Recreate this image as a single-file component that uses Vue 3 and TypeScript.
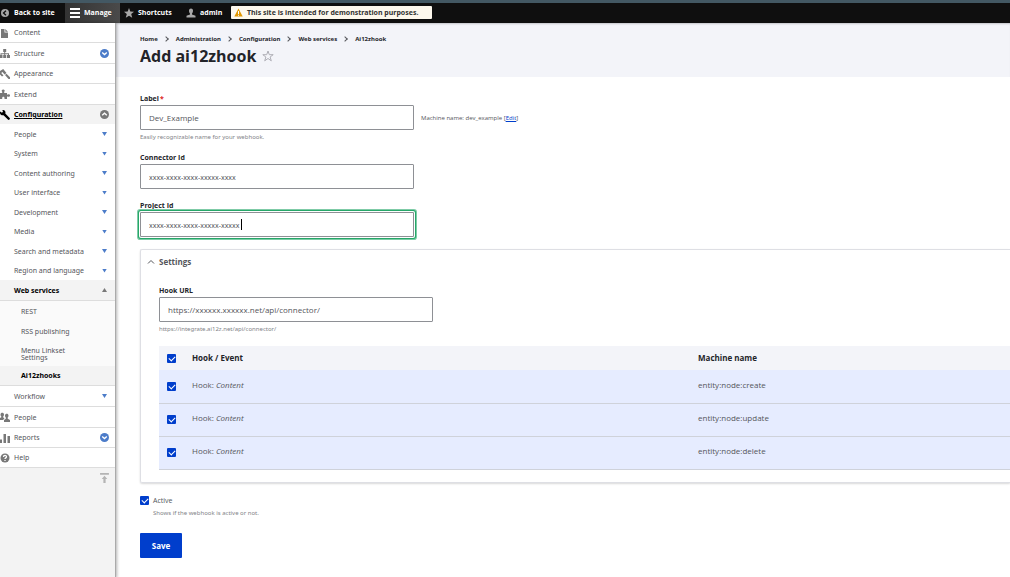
<script setup lang="ts">
import { ref } from 'vue'

interface MenuItem {
  label: string
  icon?: string
  toggle?: boolean
}

const topItems: MenuItem[] = [
  { label: 'Content', icon: 'content' },
  { label: 'Structure', icon: 'structure', toggle: true },
  { label: 'Appearance', icon: 'appearance' },
  { label: 'Extend', icon: 'extend' },
]
const configItems = [
  'People',
  'System',
  'Content authoring',
  'User interface',
  'Development',
  'Media',
  'Search and metadata',
  'Region and language',
]
const serviceItems = ['REST', 'RSS publishing', 'Menu Linkset Settings']
const bottomItems: MenuItem[] = [
  { label: 'People', icon: 'people' },
  { label: 'Reports', icon: 'reports', toggle: true },
  { label: 'Help', icon: 'help' },
]
const icons: Record<string, string> = {
  content: 'M1 1h3.500v3.500H8V10H1zM5.300 1L8 3.700H5.300z',
  structure: 'M3.200 1h3v3H5.200v1.200H9V7h1v3H7V7h1V6.200H5.200V7h1v3h-3V7h1V6.200H1.500V7h1v3H0V7h.5V5.200h3.700V4h-1z',
  appearance: 'M0 2L3.200 0l3.300 4-2 1.500L2.500 3 1.200 4 3.500 6.500 2 7.500 0 5.500zM5 6l1.500-1.200L10 8.300v1.700H8.500z',
  extend: 'M0 4h2.200V2.800C1 1.500 2 .5 3.200.5s2.200 1 1 2.300V4H7v1.700c1.500-1 3-.5 3 .8s-1.500 1.800-3 .8V10H4.500V9C4.500 7.300 2.200 7.300 2.200 9v1H0z',
  people: 'M.5 2.500C.5 0 4 0 4 2.500c0 1-.3 1.600-.8 2v1l1 .5v1H3.500v1H0V6l1.300-.7v-.8C.8 4 .5 3.500.5 2.500zM5 3.500C5 1 8.500 1 8.500 3.500c0 1-.3 1.600-.8 2v1.300L10 8v2H4V8l1.800-1.200V5.500c-.5-.4-.8-1-.8-2z',
  reports: 'M0 6.500h2V10H0zM3.500 1H6v9H3.500zM7.500 3H10v7H7.500z',
}

const label = ref('Dev_Example')
const connectorId = ref('xxxx-xxxx-xxxx-xxxxx-xxxx')
const projectId = ref('xxxx-xxxx-xxxx-xxxxx-xxxxx')
const hookUrl = ref('https://xxxxxx.xxxxxx.net/api/connector/')
const active = ref(true)
const allHooks = ref(true)
const hooks = ref([
  { name: 'entity:node:create', on: true },
  { name: 'entity:node:update', on: true },
  { name: 'entity:node:delete', on: true },
])
const crumbs = ['Home', 'Administration', 'Configuration', 'Web services', 'Ai12zhook']
</script>

<template>
  <div class="page">
    <nav class="toolbar" aria-label="Toolbar">
      <a class="tab back" href="#">
        <svg class="icon" viewBox="0 0 10 10"><circle cx="5" cy="5" r="4" /><path class="cut" d="M6 2.800L3.500 5 6 7.200" /></svg>
        Back to site
      </a>
      <a class="tab manage" href="#">
        <svg class="icon bars" viewBox="0 0 10 10"><path d="M0 0h10v2H0zM0 4h10v2H0zM0 8h10v2H0z" /></svg>
        Manage
      </a>
      <a class="tab shortcuts" href="#">
        <svg class="icon" viewBox="0 0 10 10"><path d="M5 0l1.300 3.500L10 3.700 7.200 6l1 3.800L5 7.700 1.800 9.800l1-3.800L0 3.700l3.700-.2z" /></svg>
        Shortcuts
      </a>
      <a class="tab user" href="#">
        <svg class="icon" viewBox="0 0 10 10"><path d="M3 2.500C3-.3 7-.3 7 2.500c0 1.500-.4 2.300-1 3V6.500l3.500 1.300V9.500h-9V7.800L4 6.500V5.500c-.6-.7-1-1.500-1-3z" /></svg>
        admin
      </a>
      <p class="notice">
        <svg class="warn" viewBox="0 0 9 9"><path fill="#e29700" d="M4.500 0.500L8.700 8.500H.3z" /><path fill="#fff" d="M4 3h1v3H4zM4 6.800h1v1H4z" /></svg>
        This site is intended for demonstration purposes.
      </p>
    </nav>

    <div class="body">
      <aside class="tray">
        <ul class="menu">
          <li v-for="item in topItems" :key="item.label" class="row">
            <svg class="icon" viewBox="0 0 10 10"><path :d="icons[item.icon!]" /></svg>
            <a href="#">{{ item.label }}</a>
            <button v-if="item.toggle" class="toggle" type="button" :aria-label="'Expand ' + item.label">
              <svg viewBox="0 0 9 9"><circle cx="4.500" cy="4.500" r="4.500" fill="#4c7cc9" /><path d="M2.200 3.500l2.300 2 2.300-2" /></svg>
            </button>
          </li>
        </ul>
        <div class="row config">
          <svg class="icon dark" viewBox="0 0 10 10"><path d="M0 1.500l2 1.200L3 1.500 2.300 0C4.500-.3 6 1.500 5.300 3.500L9.700 8c.8 1-.8 2.500-1.800 1.600L3.500 5.200C2 5.700 0 4.500 0 3z" /></svg>
          <a href="#">Configuration</a>
          <button class="toggle" type="button" aria-label="Collapse Configuration">
            <svg viewBox="0 0 9 9"><circle cx="4.500" cy="4.500" r="4.500" fill="#787878" /><path d="M2.200 5.300l2.300-2 2.300 2" /></svg>
          </button>
        </div>
        <ul class="menu sub">
          <li v-for="item in configItems" :key="item" class="row">
            <a href="#">{{ item }}</a>
            <button class="arrow" type="button" :aria-label="'Expand ' + item"></button>
          </li>
        </ul>
        <div class="row services">
          <a href="#">Web services</a>
          <button class="arrow up" type="button" aria-label="Collapse Web services"></button>
        </div>
        <ul class="menu deep">
          <li v-for="item in serviceItems" :key="item" class="row"><a href="#">{{ item }}</a></li>
          <li class="row current"><a href="#">Ai12zhooks</a></li>
        </ul>
        <div class="row workflow">
          <a href="#">Workflow</a>
          <button class="arrow" type="button" aria-label="Expand Workflow"></button>
        </div>
        <ul class="menu bottom">
          <li v-for="item in bottomItems" :key="item.label" class="row">
            <svg v-if="item.icon === 'help'" class="icon" viewBox="0 0 10 10"><circle cx="5" cy="5" r="4.500" /><path class="cut" d="M3.500 4c0-2 3-2 3-.3C6.500 5 5 4.700 5 6M5 7v1" /></svg>
            <svg v-else class="icon" viewBox="0 0 10 10"><path :d="icons[item.icon!]" /></svg>
            <a href="#">{{ item.label }}</a>
            <button v-if="item.toggle" class="toggle" type="button" :aria-label="'Expand ' + item.label">
              <svg viewBox="0 0 9 9"><circle cx="4.500" cy="4.500" r="4.500" fill="#4c7cc9" /><path d="M2.200 3.500l2.300 2 2.300-2" /></svg>
            </button>
          </li>
        </ul>
        <button class="orient" type="button" aria-label="Horizontal orientation">
          <svg viewBox="0 0 8 9"><path d="M0 0h8v1.500H0zM4 2.500L6.500 5.500H5V9H3V5.500H1.500z" /></svg>
        </button>
      </aside>

      <main class="content">
        <header class="head">
          <nav aria-label="Breadcrumb">
            <ol class="crumbs">
              <li v-for="crumb in crumbs" :key="crumb"><a href="#">{{ crumb }}</a></li>
            </ol>
          </nav>
          <div class="title">
            <h1>Add ai12zhook</h1>
            <button class="star" type="button" aria-label="Add to shortcuts">
              <svg viewBox="0 0 12 12"><path d="M6 1l1.300 3.700h3.900L8.100 7l1.200 3.800L6 8.500l-3.300 2.300L3.900 7 .8 4.700h3.900z" /></svg>
            </button>
          </div>
        </header>

        <form class="form" @submit.prevent>
          <div class="field">
            <label for="label">Label<span class="req">*</span></label>
            <div class="line">
              <input id="label" v-model="label" class="text" type="text" />
              <span class="machine">Machine name: dev_example [<a href="#">Edit</a>]</span>
            </div>
            <p class="hint">Easily recognizable name for your webhook.</p>
          </div>
          <div class="field connector">
            <label for="connector">Connector Id</label>
            <input id="connector" v-model="connectorId" class="text x" type="text" />
          </div>
          <div class="field project">
            <label for="project">Project Id</label>
            <div class="focus">
              <input id="project" v-model="projectId" class="text x" type="text" />
              <span class="caret"></span>
            </div>
          </div>

          <details class="settings" open>
            <summary>
              <svg viewBox="0 0 8 8"><path d="M1 5.500l3-3 3 3" /></svg>
              Settings
            </summary>
            <div class="inner">
              <label for="hook">Hook URL</label>
              <input id="hook" v-model="hookUrl" class="text" type="text" />
              <p class="hint">https://integrate.ai12z.net/api/connector/</p>
              <table>
                <thead>
                  <tr>
                    <th class="tick"><input v-model="allHooks" type="checkbox" aria-label="Select all rows" /></th>
                    <th class="event">Hook / Event</th>
                    <th>Machine name</th>
                  </tr>
                </thead>
                <tbody>
                  <tr v-for="hook in hooks" :key="hook.name">
                    <td class="tick"><input v-model="hook.on" type="checkbox" :aria-label="hook.name" /></td>
                    <td>Hook: <em>Content</em></td>
                    <td>{{ hook.name }}</td>
                  </tr>
                </tbody>
              </table>
            </div>
          </details>

          <div class="active">
            <input id="active" v-model="active" type="checkbox" />
            <label for="active">Active</label>
          </div>
          <p class="hint active-hint">Shows if the webhook is active or not.</p>
          <button class="save" type="submit">Save</button>
        </form>
      </main>
    </div>
  </div>
</template>

<style>
body { margin: 0; background: #fff; }
</style>

<style scoped>
* { box-sizing: border-box; }
.page {
  min-height: 100vh;
  display: flex;
  flex-direction: column;
  font: 7px/10px "Open Sans", "Noto Sans", sans-serif;
  color: #55565b;
  overflow: hidden;
}
a { color: inherit; text-decoration: none; }
button { padding: 0; border: 0; background: none; font: inherit; color: inherit; }
ul, ol { margin: 0; padding: 0; list-style: none; }
p, h1 { margin: 0; }
svg { display: block; flex: none; }

.toolbar {
  display: flex;
  height: 23px;
  border-top: 3px solid #435863;
  background: #0f0f0f;
  color: #fff;
  font-weight: bold;
  line-height: 20px;
}
.tab { display: flex; align-items: center; gap: 4px; }
.back { width: 65px; }
.manage { width: 55px; padding-left: 5px; background: linear-gradient(90deg, #333, #4a4a4a); }
.shortcuts { width: 62px; padding-left: 4px; }
.user { width: 49px; padding-left: 4px; }
.icon { width: 10px; height: 10px; fill: #787878; }
.toolbar .icon { fill: #a8a8a8; }
.toolbar .bars { fill: #fff; }
.cut { fill: none; stroke: #fff; stroke-width: 1.300; }
.toolbar .cut { stroke: #0f0f0f; }
.notice {
  display: flex;
  align-items: center;
  gap: 4px;
  height: 13px;
  min-width: 201px;
  margin-top: 3px;
  padding: 0 6px 0 3px;
  border-radius: 1px;
  background: #fdf8ed;
  color: #333;
  font: bold 7px/13px "Noto Sans", sans-serif;
}
.warn { width: 9px; height: 9px; }

.body { flex: 1; display: flex; }
.tray {
  position: relative;
  z-index: 1;
  flex: none;
  width: 116px;
  border-right: 1px solid #aaa;
  background: #f3f3f3;
  box-shadow: 1px 0 3px rgba(0, 0, 0, 0.3);
  font: 7px/7px "Noto Sans", sans-serif;
}
.row {
  display: flex;
  align-items: center;
  height: 20px;
  padding-right: 6px;
  border-bottom: 1px solid #ddd;
  background: #fff;
}
.menu .row:nth-child(even) { height: 21px; }
.row .icon { margin-right: 4px; }
.row a { flex: 1; }
.icon.dark { fill: #000; }
.row.config { height: 19px; border: 0; background: #f3f3f3; color: #000; font-weight: bold; }
.config a { text-decoration: underline; }
.sub .row, .sub .row:nth-child(even) { padding-left: 14px; height: 19px; border: 0; }
.sub .row:nth-child(odd) { height: 20px; }
.row.services { height: 21px; padding-left: 14px; background: #f3f3f3; color: #000; font-weight: bold; }
.deep .row, .deep .row:nth-child(even) { height: 20px; padding: 0 40px 0 21px; border: 0; background: #fafafa; }
.deep .row:nth-child(3) { height: 25px; }
.deep .row.current:nth-child(even) { padding-right: 6px; border-bottom: 1px solid #ddd; background: #f3f3f3; color: #000; font-weight: bold; }
.row.workflow { height: 21px; padding-left: 14px; }
.bottom .row, .bottom .row:nth-child(even) { height: 20px; }
.bottom .row:first-child { height: 21px; }
.toggle svg { width: 9px; height: 9px; fill: none; stroke: #fff; stroke-width: 1.400; }
.toggle circle { stroke: none; }
.arrow { width: 5px; height: 4px; margin-right: 2px; background: #4c7cc9; clip-path: polygon(0 0, 100% 0, 50% 100%); }
.arrow.up { background: #787878; clip-path: polygon(50% 0, 100% 100%, 0 100%); }
.orient { display: block; margin: 5px 6px 0 auto; }
.orient svg { width: 9px; height: 10px; fill: #b4b4b4; }

.content { flex: 1; min-width: 0; }
.head { height: 54px; padding: 11px 24px 0; background: #f3f4f9; box-shadow: inset 0 2px 2px -1px rgba(0, 0, 0, 0.2); color: #232429; }
.crumbs { display: flex; font: bold 6px/10px "Noto Sans", sans-serif; }
.crumbs li { display: flex; align-items: center; }
.crumbs li + li::before {
  content: "";
  width: 3px;
  height: 3px;
  margin: 0 8px 0 6px;
  border: solid #55565b;
  border-width: 1px 1px 0 0;
  transform: rotate(45deg);
}
.title { display: flex; align-items: center; gap: 6px; }
h1 { font-size: 16px; font-weight: bold; line-height: 24px; }
.star svg { width: 12px; height: 12px; fill: none; stroke: #aeaeb6; stroke-width: 1; }

.form { padding: 17px 0 20px 24px; }
label { display: block; color: #232429; font-weight: bold; }
.req { margin-left: 1px; color: #dc2323; }
.text {
  display: block;
  width: 274px;
  height: 25px;
  padding: 0 8px;
  border: 1px solid #8e9095;
  border-radius: 1px;
  background: #fff;
  color: #55565b;
  font: 8px/12px "Open Sans", "Noto Sans", sans-serif;
  outline: none;
}
.text.x { padding-top: 2px; font: 7px/12px "Noto Sans", sans-serif; }
.line { display: flex; align-items: center; gap: 7px; }
.field .line, .field > .text, .focus { margin-top: 1px; }
.machine { font-size: 6px; }
.machine a { color: #003ecc; text-decoration: underline; }
.hint { margin-top: 2px; color: #828388; font: 6px/10px "Noto Sans", sans-serif; }
.connector { margin-top: 11px; }
.project { margin-top: 12px; }
.focus { position: relative; width: 274px; border-radius: 1px; box-shadow: 0 0 0 1px #fff, 0 0 0 2px #26a769, 0 0 0 3px #7fcba7; }
.caret { position: absolute; top: 7px; left: 101px; width: 1px; height: 11px; background: #000; }
.settings {
  margin-top: 12px;
  border: 1px solid #dedfe4;
  border-right: 0;
  border-radius: 2px 0 0 2px;
  box-shadow: 0 1px 2px rgba(0, 0, 0, 0.15);
}
summary { display: flex; align-items: center; gap: 4px; padding: 7px 6px; font-size: 8px; font-weight: bold; }
summary svg { width: 8px; height: 8px; fill: none; stroke: #55565b; stroke-width: 1; }
.inner { padding: 12px 0 12px 18px; }
.inner .text { margin-top: 1px; }
table { width: 100%; margin-top: 12px; border-collapse: collapse; font-size: 8px; line-height: 10px; }
th { height: 24px; padding: 0; background: #f3f4f9; color: #232429; text-align: left; font-weight: bold; }
td { height: 33px; padding: 0 0 3px; border-bottom: 1px solid #cfd2da; background: #e6ecff; }
.tick { width: 33px; padding-left: 8px; }
td.tick { padding-bottom: 0; }
.event { width: 506px; }
input[type="checkbox"] {
  display: block;
  flex: none;
  appearance: none;
  width: 9px;
  height: 9px;
  margin: 0;
  border-radius: 1px;
  background: #003ecc;
}
input[type="checkbox"]:checked::before {
  content: "";
  display: block;
  width: 5px;
  height: 3px;
  margin: 2px;
  border: solid #fff;
  border-width: 0 0 1px 1px;
  transform: rotate(-45deg);
}
.active { display: flex; align-items: center; gap: 4px; margin-top: 13px; }
.active label { color: #55565b; font-weight: normal; }
.active-hint { margin-left: 13px; }
.save {
  width: 42px;
  height: 25px;
  margin-top: 15px;
  padding-top: 2px;
  border-radius: 1px;
  background: #003ecc;
  color: #fff;
  font-size: 8px;
  font-weight: bold;
}
</style>
